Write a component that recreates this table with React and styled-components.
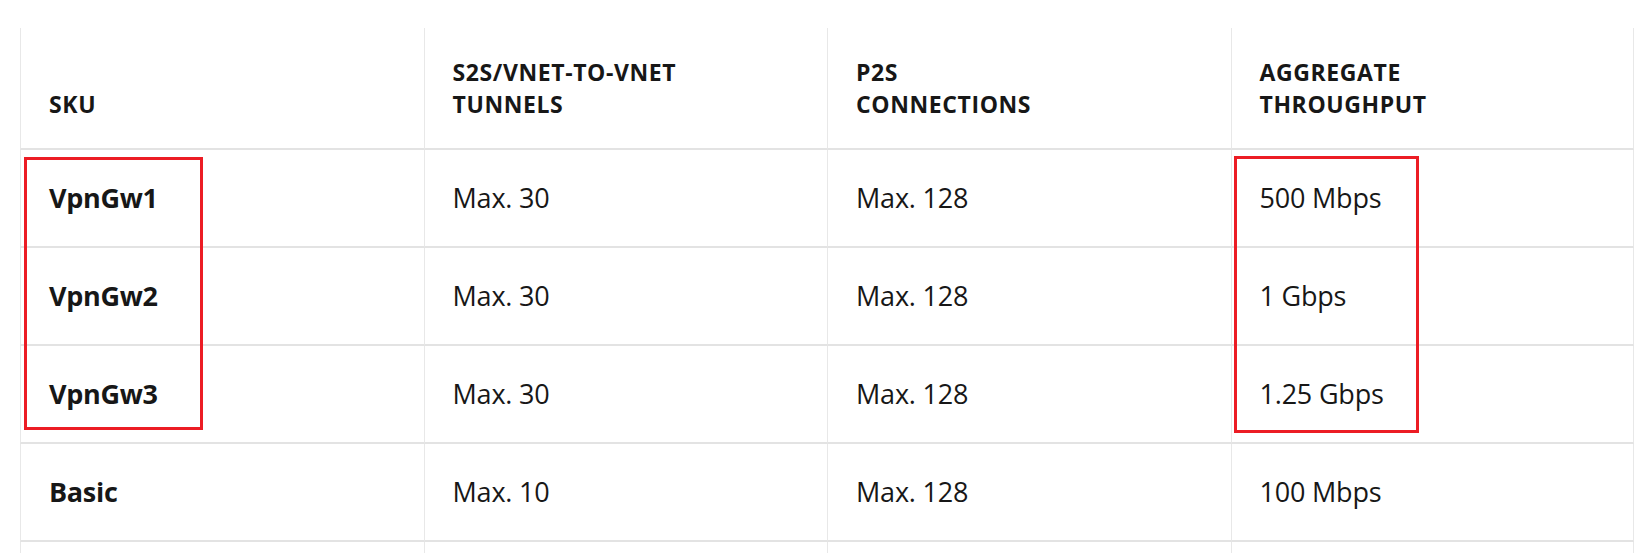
import styled, { createGlobalStyle } from 'styled-components'

const GlobalStyle = createGlobalStyle`
  html, body {
    margin: 0;
    padding: 0;
    background: #ffffff;
    overflow: hidden;
  }
  body {
    font-family: 'Open Sans', 'Noto Sans', 'Liberation Sans', sans-serif;
    color: #171717;
  }
`

const Page = styled.main`
  position: relative;
  padding: 28px 0 0 20px;
  inline-size: 1614px;
`

const SkuTable = styled.table`
  inline-size: 1614px;
  table-layout: fixed;
  border-collapse: separate;
  border-spacing: 0;
`

const HeadCell = styled.th`
  padding: 28px;
  vertical-align: bottom;
  text-align: left;
  font-size: 23px;
  line-height: 32px;
  font-weight: 700;
  letter-spacing: 0.6px;
  text-transform: uppercase;
  color: #171717;
  border-left: 1px solid #e8e8e8;
  border-bottom: 2px solid #e3e3e3;
  &:last-child {
    border-right: 1px solid #e8e8e8;
  }
  & > span {
    display: block;
  }
`

const Cell = styled.td`
  padding: 30px 28px;
  vertical-align: middle;
  font-size: 27px;
  line-height: 36px;
  font-weight: ${({ $strong }) => ($strong ? 700 : 400)};
  letter-spacing: ${({ $strong }) => ($strong ? '-0.3px' : '-0.2px')};
  color: #171717;
  border-left: 1px solid #e8e8e8;
  border-bottom: 2px solid #e3e3e3;
  &:last-child {
    border-right: 1px solid #e8e8e8;
  }
`

const Highlight = styled.div`
  position: absolute;
  box-sizing: border-box;
  border: 3px solid #ec1c24;
  pointer-events: none;
`

const headers = [
  ['SKU'],
  ['S2S/VNET-to-VNET', 'Tunnels'],
  ['P2S', 'Connections'],
  ['Aggregate', 'Throughput']
]

const rows = [
  ['VpnGw1', 'Max. 30', 'Max. 128', '500 Mbps'],
  ['VpnGw2', 'Max. 30', 'Max. 128', '1 Gbps'],
  ['VpnGw3', 'Max. 30', 'Max. 128', '1.25 Gbps'],
  ['Basic', 'Max. 10', 'Max. 128', '100 Mbps'],
  ['\u00a0', '\u00a0', '\u00a0', '\u00a0']
]

const App = () => {
  return (
    <>
      <GlobalStyle />
      <Page>
        <SkuTable>
          <thead>
            <tr>
              {headers.map((lines) => (
                <HeadCell key={lines[0]}>
                  {lines.map((line) => (
                    <span key={line}>{line}</span>
                  ))}
                </HeadCell>
              ))}
            </tr>
          </thead>
          <tbody>
            {rows.map((row, r) => (
              <tr key={r}>
                {row.map((value, i) => (
                  <Cell key={i} $strong={i === 0}>{value}</Cell>
                ))}
              </tr>
            ))}
          </tbody>
        </SkuTable>
        {/* annotation boxes drawn over the table */}
        <Highlight style={{ left: 24, top: 157, width: 179, height: 273 }} />
        <Highlight style={{ left: 1234, top: 156, width: 185, height: 277 }} />
      </Page>
    </>
  )
}

export default App
